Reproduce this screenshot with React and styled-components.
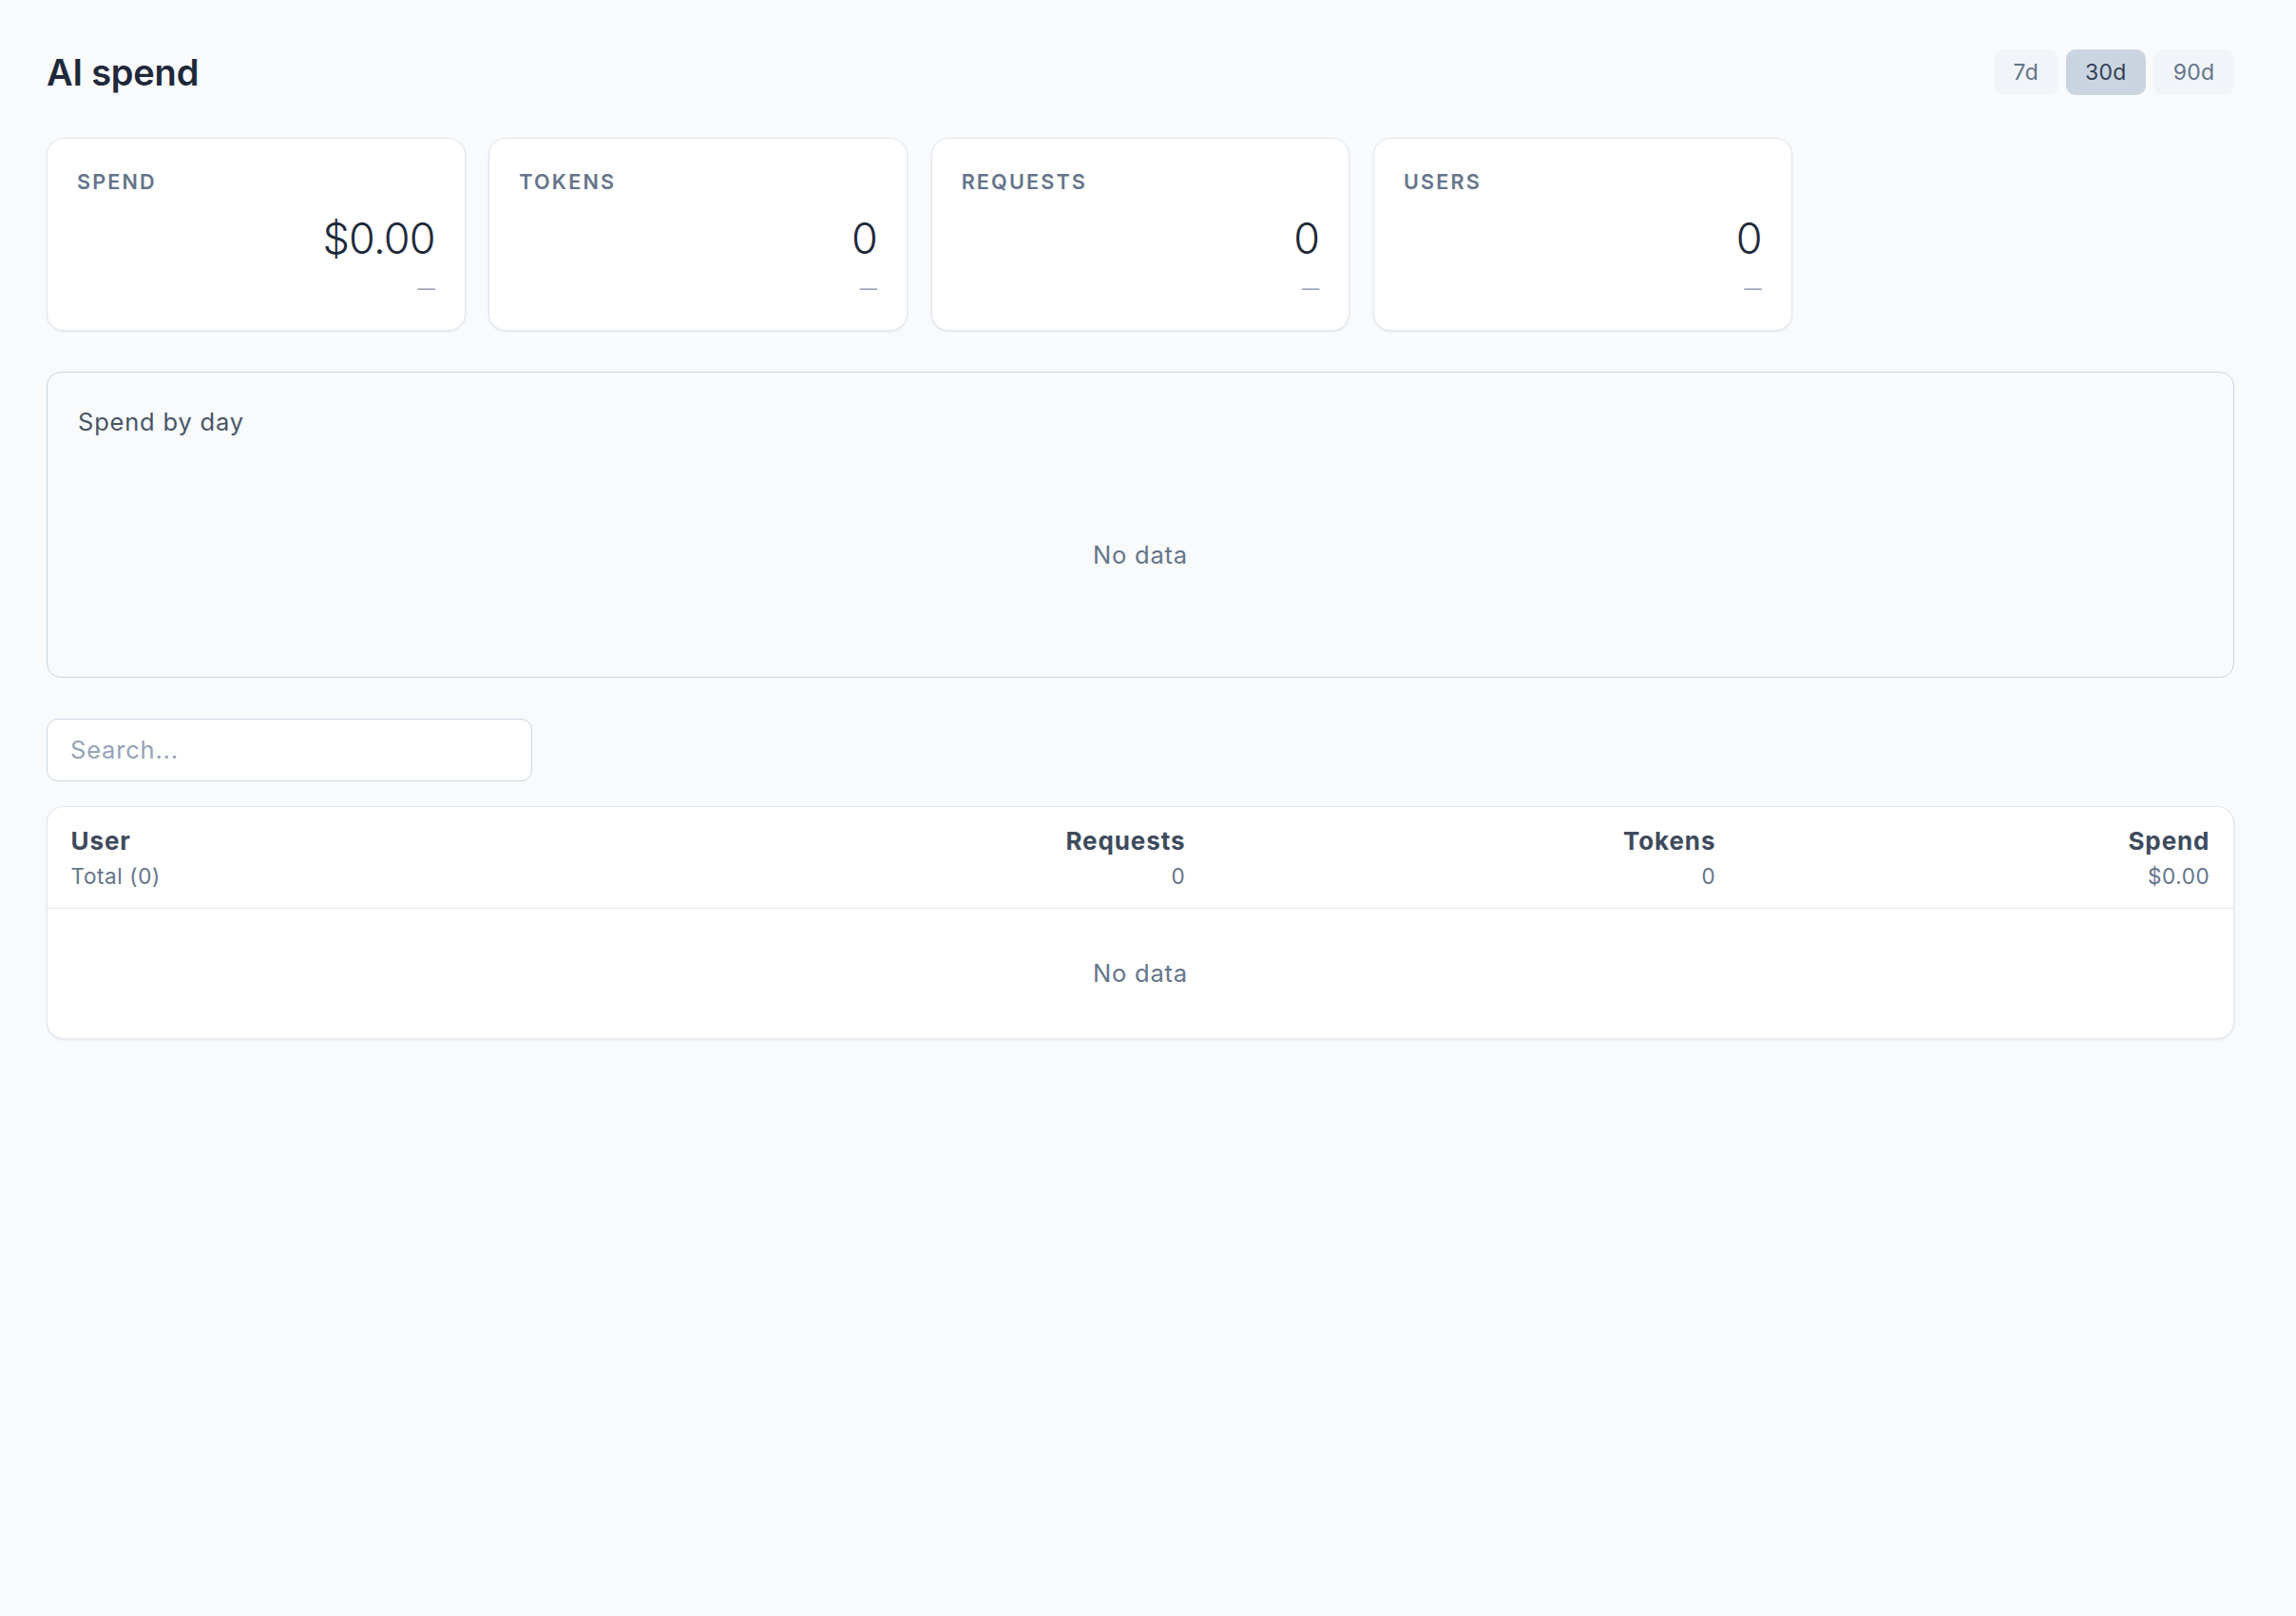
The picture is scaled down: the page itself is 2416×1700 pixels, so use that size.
import React, { useState } from 'react';
import styled, { createGlobalStyle } from 'styled-components';

const GlobalStyle = createGlobalStyle`
  html, body {
    margin: 0;
    padding: 0;
    background: #f8fafc;
    min-height: 100%;
  }
  body {
    font-family: Inter, "Noto Sans", "Liberation Sans", sans-serif;
    color: #1e293b;
  }
  * { box-sizing: border-box; }
`

const Page = styled.div`
  min-height: 100vh;
  padding: 52px 65px 49px 49px;
`

const Header = styled.header`
  display: flex;
  align-items: center;
  justify-content: space-between;
  height: 48px;
  margin-bottom: 45px;
`

const Title = styled.h1`
  margin: 0;
  font-size: 38px;
  line-height: 48px;
  font-weight: 600;
  color: #1e293b;
  letter-spacing: -0.2px;
`

const RangeGroup = styled.div`
  display: flex;
  gap: 8px;
`

const RangeButton = styled.button`
  height: 48px;
  padding: 0 20.5px;
  border: none;
  border-radius: 10px;
  font-family: inherit;
  font-size: 23px;
  letter-spacing: 0.3px;
  cursor: pointer;
  background: ${props => props.active ? "#cbd5e1" : "#f1f5f9"};
  color: ${props => props.active ? "#334155" : "#64748b"};
`

const StatGrid = styled.div`
  display: grid;
  grid-template-columns: repeat(5, minmax(0, 1fr));
  gap: 24.6px;
  margin-bottom: 43px;
`

const StatCard = styled.div`
  background: #fff;
  border: 1.5px solid #e2e8f0;
  border-radius: 18px;
  padding: 30px 31px 31px;
  box-shadow: 0 1px 3px rgba(15, 23, 42, 0.06), 0 1px 2px rgba(15, 23, 42, 0.03);
`

const StatLabel = styled.div`
  font-size: 21.6px;
  line-height: 31px;
  font-weight: 600;
  letter-spacing: 0.1em;
  text-transform: uppercase;
  color: #64748b;
`

const StatValue = styled.div`
  margin-top: 16px;
  font-size: 45px;
  line-height: 55px;
  font-weight: 300;
  letter-spacing: -0.8px;
  text-align: right;
  color: #1e293b;
`

const StatDelta = styled.div`
  margin-top: 13px;
  font-size: 18.5px;
  line-height: 25px;
  text-align: right;
  color: #94a3b8;
`

const ChartCard = styled.section`
  border: 1.5px solid #cbd5e1;
  border-radius: 15px;
  padding: 33px 32px 31.5px;
  margin-bottom: 43px;
`

const ChartTitle = styled.h2`
  margin: 0 0 24px;
  font-size: 25.5px;
  line-height: 37px;
  font-weight: 400;
  letter-spacing: 0.8px;
  color: #475569;
`

const ChartArea = styled.div`
  height: 194px;
  display: flex;
  align-items: center;
  justify-content: center;
`

const EmptyText = styled.span`
  font-size: 25.5px;
  line-height: 37px;
  letter-spacing: 0.8px;
  color: #64748b;
`

const SearchInput = styled.input`
  display: block;
  width: 511px;
  height: 66px;
  margin-bottom: 26px;
  padding: 0 24px;
  border: 1.5px solid #cbd5e1;
  border-radius: 12px;
  background: #fff;
  font-family: inherit;
  font-size: 25.5px;
  letter-spacing: 0.8px;
  color: #1e293b;
  outline: none;

  &::placeholder {
    color: #94a3b8;
  }
`

const TableCard = styled.div`
  background: #fff;
  border: 1.5px solid #e2e8f0;
  border-radius: 18px;
  overflow: hidden;
  box-shadow: 0 1px 3px rgba(15, 23, 42, 0.06), 0 1px 2px rgba(15, 23, 42, 0.03);
`

const HeadRow = styled.div`
  display: grid;
  grid-template-columns: minmax(0, 1fr) 558px 558px 520px;
  border-bottom: 1.5px solid #e2e8f0;
`

const HeadCell = styled.div`
  padding: 17px 24.6px 17px;
  text-align: ${props => props.right ? "right" : "left"};
`

const HeadName = styled.div`
  font-size: 26px;
  line-height: 37px;
  font-weight: 700;
  letter-spacing: 0.9px;
  color: #3e4a5d;
`

const HeadTotal = styled.div`
  margin-top: 3px;
  font-size: 22.5px;
  line-height: 32px;
  letter-spacing: 0.6px;
  color: #64748b;
`

const EmptyRow = styled.div`
  padding: 49px 0 50px;
  text-align: center;
`

const RANGES = ["7d", "30d", "90d"]

const STATS = [
  { label: "Spend", value: "$0.00" },
  { label: "Tokens", value: "0" },
  { label: "Requests", value: "0" },
  { label: "Users", value: "0" },
]

const COLUMNS = [
  { name: "User", total: "Total (0)" },
  { name: "Requests", total: "0", right: true },
  { name: "Tokens", total: "0", right: true },
  { name: "Spend", total: "$0.00", right: true },
]

export default function App() {
  const [range, setRange] = useState("30d");
  const [query, setQuery] = useState("");

  return (
    <>
      <GlobalStyle />
      <Page>
        <Header>
          <Title>AI spend</Title>
          <RangeGroup>
            {RANGES.map(r => (
              <RangeButton key={r} active={range === r} onClick={() => setRange(r)}>{r}</RangeButton>
            ))}
          </RangeGroup>
        </Header>

        <StatGrid>
          {STATS.map(s => (
            <StatCard key={s.label}>
              <StatLabel>{s.label}</StatLabel>
              <StatValue>{s.value}</StatValue>
              <StatDelta>—</StatDelta>
            </StatCard>
          ))}
        </StatGrid>

        <ChartCard>
          <ChartTitle>Spend by day</ChartTitle>
          <ChartArea>
            <EmptyText>No data</EmptyText>
          </ChartArea>
        </ChartCard>

        <SearchInput placeholder="Search..." value={query} onChange={e => setQuery(e.target.value)} />

        <TableCard>
          <HeadRow>
            {COLUMNS.map(c => (
              <HeadCell key={c.name} right={c.right}>
                <HeadName>{c.name}</HeadName>
                <HeadTotal>{c.total}</HeadTotal>
              </HeadCell>
            ))}
          </HeadRow>
          <EmptyRow>
            <EmptyText>No data</EmptyText>
          </EmptyRow>
        </TableCard>
      </Page>
    </>
  )
}
